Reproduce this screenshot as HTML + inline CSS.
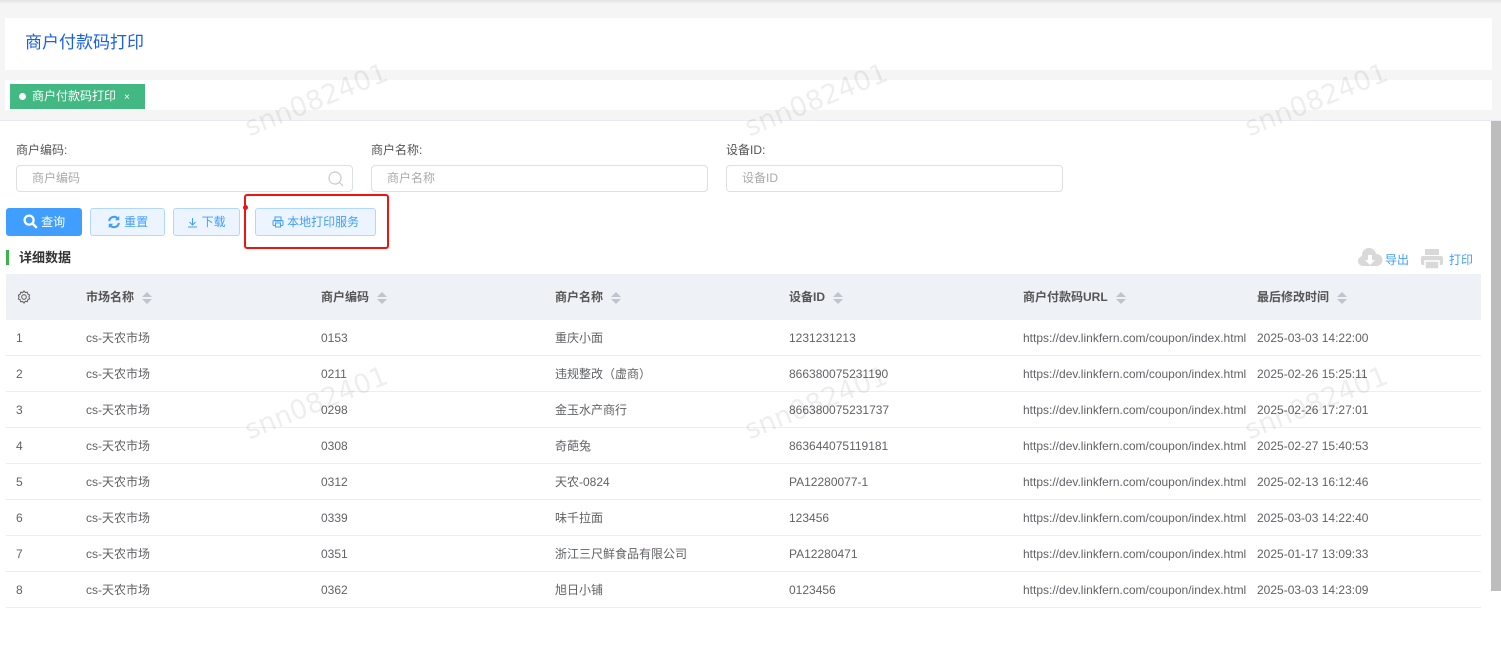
<!DOCTYPE html>
<html><head><meta charset="utf-8"><style>
*{box-sizing:border-box;margin:0;padding:0}
body{width:1501px;height:651px;overflow:hidden;background:#fff;font-family:"Liberation Sans","Noto Sans CJK SC",sans-serif;font-size:12px;color:#606266;position:relative}
.abs{position:absolute}
.top{left:0;top:0;width:1501px;height:121px;background:#f5f5f6;border-bottom:1px solid #e8eaf2}
.shadow{left:0;top:0;width:1501px;height:4px;background:linear-gradient(#e2e2e2,#f5f5f6)}
.hdr{left:5px;top:18px;width:1487px;height:52px;background:#fff}
.hdr span{position:absolute;left:20px;top:13px;font-size:17px;line-height:24px;color:#1a5fe8}
.tabs{left:5px;top:80px;width:1487px;height:30px;background:#fff}
.tab{left:10px;top:84px;width:135px;height:25px;background:#42b983;color:#fff;font-size:12px;line-height:25px;padding-left:22px}
.tab:before{content:"";position:absolute;left:9px;top:9px;width:7px;height:7px;border-radius:50%;background:#fff}
.tab i{font-style:normal;font-size:10px;margin-left:8px}
.lbl{top:143px;font-size:12px;line-height:14px;color:#555}
.inp{top:165px;height:27px;border:1px solid #dcdfe6;border-radius:4px;color:#aaa;padding-left:15px;line-height:25px;font-size:12px;width:337px}
.btn{top:208px;height:28px;border-radius:3px;font-size:12px;line-height:26px;text-align:center;border:1px solid #b3d8ff;background:#ecf5ff;color:#409eff}
.red{left:244px;top:194px;width:145px;height:55px;border:2px solid #f0140f;border-radius:3px}
.th{left:6px;top:274px;width:1475px;height:46px;background:#eef1f6}
.tr{left:6px;width:1475px;height:36px;border-bottom:1px solid #ebeef5}
.c{position:absolute;white-space:nowrap;font-size:12px;line-height:14px;height:14px;color:#606266}
.h{font-weight:bold;color:#555;top:290px}
.sort{display:inline-block;margin-left:8px;vertical-align:middle;width:10px;height:12px;position:relative}
.sort:before{content:"";position:absolute;left:0;top:0;border:5px solid transparent;border-top:0;border-bottom:5px solid #c0c4cc}
.sort:after{content:"";position:absolute;left:0;top:7px;border:5px solid transparent;border-bottom:0;border-top:5px solid #c0c4cc}
.wm{color:rgba(0,0,0,0.065);font-size:27px;transform:rotate(-22deg);transform-origin:left bottom;font-family:"DejaVu Sans",sans-serif}
.sb{left:1491px;top:121px;width:10px;height:470px;background:#bdbdbd}
</style></head><body>
<div class="abs top"></div><div class="abs shadow"></div>
<div class="abs hdr"><span>商户付款码打印</span></div>
<div class="abs tabs"></div>
<div class="abs tab">商户付款码打印<i>×</i></div>

<div class="abs lbl" style="left:16px">商户编码:</div>
<div class="abs lbl" style="left:371px">商户名称:</div>
<div class="abs lbl" style="left:726px">设备ID:</div>
<div class="abs inp" style="left:16px">商户编码
<svg style="position:absolute;right:8px;top:5px" width="16" height="16" viewBox="0 0 16 16"><circle cx="7" cy="7" r="6" fill="none" stroke="#c8cad0" stroke-width="1.2"/><path d="M11.5 11.5L15 15" stroke="#c8cad0" stroke-width="1.2"/></svg></div>
<div class="abs inp" style="left:371px">商户名称</div>
<div class="abs inp" style="left:726px">设备ID</div>

<div class="abs btn" style="left:6px;width:76px;background:#409eff;border-color:#409eff;color:#fff">
<svg style="vertical-align:-3px" width="15" height="15" viewBox="0 0 16 16"><circle cx="6.5" cy="6.5" r="4.8" fill="none" stroke="#fff" stroke-width="2.4"/><path d="M10 10l4 4" stroke="#fff" stroke-width="2.6" stroke-linecap="round"/></svg> 查询</div>
<div class="abs btn" style="left:90px;width:75px">
<svg style="vertical-align:-3px" width="14" height="14" viewBox="0 0 16 16"><path d="M2.5 7A5.5 5.5 0 0 1 12.5 4.5M13.5 9A5.5 5.5 0 0 1 3.5 11.5" fill="none" stroke="#409eff" stroke-width="2.4"/><path d="M14 1v5h-5zM2 15v-5h5z" fill="#409eff"/></svg> 重置</div>
<div class="abs btn" style="left:173px;width:67px">
<svg style="vertical-align:-2px" width="11" height="11" viewBox="0 0 11 11"><path d="M5.5 1v7M2.5 5l3 3 3-3M1 10h9" fill="none" stroke="#409eff"/></svg> 下载</div>
<div class="abs btn" style="left:255px;width:121px">
<svg style="vertical-align:-2px" width="12" height="12" viewBox="0 0 12 12"><rect x="3" y="1" width="6" height="4" fill="none" stroke="#409eff"/><rect x="1" y="4.5" width="10" height="5" rx="1" fill="none" stroke="#409eff"/><rect x="3.5" y="7" width="5" height="4" fill="#ecf5ff" stroke="#409eff"/></svg> 本地打印服务</div>
<div class="abs red"></div>
<div class="abs" style="left:243px;top:205px;width:5px;height:5px;border-radius:50%;background:#f0140f"></div>

<div class="abs" style="left:6px;top:250px;width:3px;height:15px;background:#3cb34a"></div>
<div class="abs" style="left:19px;top:250px;font-size:13px;line-height:15px;font-weight:bold;color:#333">详细数据</div>
<svg class="abs" style="left:1357px;top:248px" width="26" height="20" viewBox="0 0 26 20"><path d="M6 18a5 5 0 0 1-1-9.9A7 7 0 0 1 19 6a6 6 0 0 1 1 12z" fill="#d9d9d9"/><path d="M11 7h4v5h3l-5 5-5-5h3z" fill="#fff"/></svg>
<div class="abs" style="left:1385px;top:253px;line-height:14px;color:#409eff">导出</div>
<svg class="abs" style="left:1420px;top:248px" width="24" height="22" viewBox="0 0 24 22"><rect x="5" y="1" width="14" height="6" fill="#d9d9d9"/><rect x="1" y="8" width="22" height="9" rx="2" fill="#d9d9d9"/><rect x="5" y="13" width="14" height="8" fill="#d9d9d9" stroke="#fff" stroke-width="1.5"/></svg>
<div class="abs" style="left:1449px;top:253px;line-height:14px;color:#409eff">打印</div>

<div class="abs th"></div>
<svg class="abs" style="left:17px;top:290px" width="14" height="14" viewBox="0 0 14 14"><circle cx="7" cy="7" r="2.3" fill="none" stroke="#666" stroke-width="1.1"/><path d="M7 1l1.3 1.5 2-.3.5 1.9 1.8.9-.6 1.9.6 1.9-1.8.9-.5 1.9-2-.3L7 13l-1.3-1.5-2 .3-.5-1.9-1.8-.9L2 7l-.6-1.9 1.8-.9.5-1.9 2 .3z" fill="none" stroke="#666" stroke-width="1.1"/></svg>
<div class="c h" style="left:86px">市场名称<span class="sort"></span></div>
<div class="c h" style="left:321px">商户编码<span class="sort"></span></div>
<div class="c h" style="left:555px">商户名称<span class="sort"></span></div>
<div class="c h" style="left:789px">设备ID<span class="sort"></span></div>
<div class="c h" style="left:1023px">商户付款码URL<span class="sort"></span></div>
<div class="c h" style="left:1257px">最后修改时间<span class="sort"></span></div>

<div class="abs tr" style="top:320px"></div><div class="abs tr" style="top:356px"></div><div class="abs tr" style="top:392px"></div><div class="abs tr" style="top:428px"></div><div class="abs tr" style="top:464px"></div><div class="abs tr" style="top:500px"></div><div class="abs tr" style="top:536px"></div><div class="abs tr" style="top:572px"></div>

<div class="c" style="left:16px;top:331px">1</div><div class="c" style="left:86px;top:331px">cs-天农市场</div><div class="c" style="left:321px;top:331px">0153</div><div class="c" style="left:555px;top:331px">重庆小面</div><div class="c" style="left:789px;top:331px">1231231213</div><div class="c" style="left:1023px;top:331px">https://dev.linkfern.com/coupon/index.html</div><div class="c" style="left:1257px;top:331px">2025-03-03 14:22:00</div>
<div class="c" style="left:16px;top:367px">2</div><div class="c" style="left:86px;top:367px">cs-天农市场</div><div class="c" style="left:321px;top:367px">0211</div><div class="c" style="left:555px;top:367px">违规整改（虚商）</div><div class="c" style="left:789px;top:367px">866380075231190</div><div class="c" style="left:1023px;top:367px">https://dev.linkfern.com/coupon/index.html</div><div class="c" style="left:1257px;top:367px">2025-02-26 15:25:11</div>
<div class="c" style="left:16px;top:403px">3</div><div class="c" style="left:86px;top:403px">cs-天农市场</div><div class="c" style="left:321px;top:403px">0298</div><div class="c" style="left:555px;top:403px">金玉水产商行</div><div class="c" style="left:789px;top:403px">866380075231737</div><div class="c" style="left:1023px;top:403px">https://dev.linkfern.com/coupon/index.html</div><div class="c" style="left:1257px;top:403px">2025-02-26 17:27:01</div>
<div class="c" style="left:16px;top:439px">4</div><div class="c" style="left:86px;top:439px">cs-天农市场</div><div class="c" style="left:321px;top:439px">0308</div><div class="c" style="left:555px;top:439px">奇葩兔</div><div class="c" style="left:789px;top:439px">863644075119181</div><div class="c" style="left:1023px;top:439px">https://dev.linkfern.com/coupon/index.html</div><div class="c" style="left:1257px;top:439px">2025-02-27 15:40:53</div>
<div class="c" style="left:16px;top:475px">5</div><div class="c" style="left:86px;top:475px">cs-天农市场</div><div class="c" style="left:321px;top:475px">0312</div><div class="c" style="left:555px;top:475px">天农-0824</div><div class="c" style="left:789px;top:475px">PA12280077-1</div><div class="c" style="left:1023px;top:475px">https://dev.linkfern.com/coupon/index.html</div><div class="c" style="left:1257px;top:475px">2025-02-13 16:12:46</div>
<div class="c" style="left:16px;top:511px">6</div><div class="c" style="left:86px;top:511px">cs-天农市场</div><div class="c" style="left:321px;top:511px">0339</div><div class="c" style="left:555px;top:511px">味千拉面</div><div class="c" style="left:789px;top:511px">123456</div><div class="c" style="left:1023px;top:511px">https://dev.linkfern.com/coupon/index.html</div><div class="c" style="left:1257px;top:511px">2025-03-03 14:22:40</div>
<div class="c" style="left:16px;top:547px">7</div><div class="c" style="left:86px;top:547px">cs-天农市场</div><div class="c" style="left:321px;top:547px">0351</div><div class="c" style="left:555px;top:547px">浙江三尺鲜食品有限公司</div><div class="c" style="left:789px;top:547px">PA12280471</div><div class="c" style="left:1023px;top:547px">https://dev.linkfern.com/coupon/index.html</div><div class="c" style="left:1257px;top:547px">2025-01-17 13:09:33</div>
<div class="c" style="left:16px;top:583px">8</div><div class="c" style="left:86px;top:583px">cs-天农市场</div><div class="c" style="left:321px;top:583px">0362</div><div class="c" style="left:555px;top:583px">旭日小铺</div><div class="c" style="left:789px;top:583px">0123456</div><div class="c" style="left:1023px;top:583px">https://dev.linkfern.com/coupon/index.html</div><div class="c" style="left:1257px;top:583px">2025-03-03 14:23:09</div>

<div class="abs wm" style="left:252px;top:112px">snn082401</div>
<div class="abs wm" style="left:752px;top:112px">snn082401</div>
<div class="abs wm" style="left:1252px;top:112px">snn082401</div>
<div class="abs wm" style="left:252px;top:415px">snn082401</div>
<div class="abs wm" style="left:752px;top:415px">snn082401</div>
<div class="abs wm" style="left:1252px;top:415px">snn082401</div>
<div class="abs sb"></div>
</body></html>
